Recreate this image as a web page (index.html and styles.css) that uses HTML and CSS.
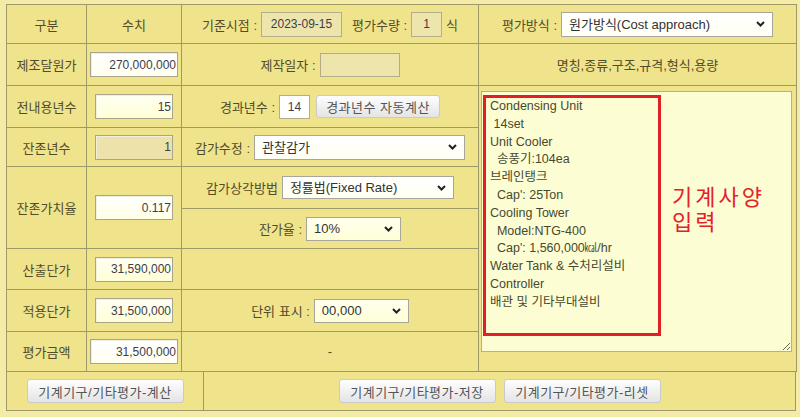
FILE: index.html
```html
<!DOCTYPE html>
<html lang="ko">
<head>
<meta charset="utf-8">
<title>기계기구 평가</title>
<link rel="stylesheet" href="styles.css">
</head>
<body>
<div class="page">
  <table class="grid">
    <colgroup><col class="c1"><col class="c2"><col class="c3"><col class="c4"></colgroup>
    <tr class="r39">
      <td>구분</td>
      <td>수치</td>
      <td>
        <div class="row">
          <span>기준시점 :</span>
          <input class="box dis w81" value="2023-09-15" readonly>
          <span class="gap">평가수량 :</span>
          <input class="box dis w31" value="1" readonly>
          <span>식</span>
        </div>
      </td>
      <td>
        <div class="row">
          <span>평가방식 :</span>
          <span class="sel"><select class="w212"><option>원가방식(Cost approach)</option></select><svg class="chev" viewBox="0 0 9 6" width="9" height="6"><path d="M1 1 L4.5 4.5 L8 1" fill="none" stroke="#222" stroke-width="2"/></svg></span>
        </div>
      </td>
    </tr>
    <tr class="r42">
      <td>제조달원가</td>
      <td><input class="num wide" value="270,000,000"></td>
      <td>
        <div class="row">
          <span>제작일자 :</span>
          <input class="box dis w80" value="">
        </div>
      </td>
      <td>명칭,종류,구조,규격,형식,용량</td>
    </tr>
    <tr class="r42">
      <td>전내용년수</td>
      <td><input class="num" value="15"></td>
      <td>
        <div class="row">
          <span>경과년수 :</span>
          <input class="box w31 white" value="14">
          <button class="btn calc">경과년수 자동계산</button>
        </div>
      </td>
      <td rowspan="7" class="speccell">
        <div class="spec">
<textarea class="spectext" spellcheck="false">Condensing Unit
 14set
Unit Cooler
  송풍기:104ea
브레인탱크
  Cap': 25Ton
Cooling Tower
  Model:NTG-400
  Cap': 1,560,000㎉/hr
Water Tank &amp; 수처리설비
Controller
배관 및 기타부대설비</textarea>
          <div class="redbox"></div>
          <div class="redtext">
            <div class="redline">기계사양</div>
            <div class="redline">입력</div>
          </div>
        </div>
      </td>
    </tr>
    <tr class="r39">
      <td>잔존년수</td>
      <td><input class="num dis" value="1" readonly></td>
      <td>
        <div class="row">
          <span>감가수정 :</span>
          <span class="sel"><select class="w211"><option>관찰감가</option></select><svg class="chev" viewBox="0 0 9 6" width="9" height="6"><path d="M1 1 L4.5 4.5 L8 1" fill="none" stroke="#222" stroke-width="2"/></svg></span>
        </div>
      </td>
    </tr>
    <tr class="r42">
      <td rowspan="2">잔존가치율</td>
      <td rowspan="2"><input class="num white" value="0.117"></td>
      <td>
        <div class="row">
          <span>감가상각방법</span>
          <span class="sel"><select class="w172"><option>정률법(Fixed Rate)</option></select><svg class="chev" viewBox="0 0 9 6" width="9" height="6"><path d="M1 1 L4.5 4.5 L8 1" fill="none" stroke="#222" stroke-width="2"/></svg></span>
        </div>
      </td>
    </tr>
    <tr class="r40">
      <td>
        <div class="row">
          <span>잔가율 :</span>
          <span class="sel"><select class="w95 yel"><option>10%</option></select><svg class="chev" viewBox="0 0 9 6" width="9" height="6"><path d="M1 1 L4.5 4.5 L8 1" fill="none" stroke="#222" stroke-width="2"/></svg></span>
        </div>
      </td>
    </tr>
    <tr class="r41">
      <td>산출단가</td>
      <td><input class="num" value="31,590,000"></td>
      <td></td>
    </tr>
    <tr class="r42">
      <td>적용단가</td>
      <td><input class="num" value="31,500,000"></td>
      <td>
        <div class="row">
          <span>단위 표시 :</span>
          <span class="sel"><select class="w95 yel"><option>00,000</option></select><svg class="chev" viewBox="0 0 9 6" width="9" height="6"><path d="M1 1 L4.5 4.5 L8 1" fill="none" stroke="#222" stroke-width="2"/></svg></span>
        </div>
      </td>
    </tr>
    <tr class="r40">
      <td>평가금액</td>
      <td><input class="num wide" value="31,500,000"></td>
      <td>-</td>
    </tr>
  </table>
  <div class="foot">
    <div class="fcell left"><button class="btn fbtn">기계기구/기타평가-계산</button></div>
    <div class="fcell right">
      <button class="btn fbtn">기계기구/기타평가-저장</button>
      <button class="btn fbtn">기계기구/기타평가-리셋</button>
    </div>
  </div>
</div>
</body>
</html>
```

FILE: styles.css
```css
* { box-sizing: border-box; }
html, body { margin: 0; }
body {
  width: 800px;
  height: 417px;
  overflow: hidden;
  background: #f3eba6;
  font-family: "Liberation Sans", "Noto Sans CJK KR", sans-serif;
  font-size: 13px;
  color: #524c2b;
}
.page { padding: 4px 4px 0 6px; }

.grid {
  border-collapse: collapse;
  table-layout: fixed;
  width: 790px;
  background: #efe38b;
}
.c1 { width: 80px; }
.c2 { width: 95px; }
.c3 { width: 297px; }
.c4 { width: 318px; }
.grid td {
  border: 1px solid #9f9969;
  padding: 0;
  text-align: center;
  vertical-align: middle;
}
.r39 { height: 39px; }
.r40 { height: 40px; }
.r41 { height: 41px; }
.r42 { height: 42px; }

.row {
  display: flex;
  justify-content: center;
  align-items: center;
  gap: 4px;
}
.gap { margin-left: 6px; }

input {
  font-family: "Liberation Sans", "Noto Sans CJK KR", sans-serif;
  font-size: 12px;
  color: #3d3d4c;
  margin: 0;
  outline: none;
}
.num {
  width: 78px;
  height: 25px;
  border: 1px solid #aaa58a;
  background: linear-gradient(#fffff4, #ffffd6);
  text-align: right;
  padding: 0 1px;
  box-shadow: inset 1px 1px 0 #f0f0e0;
}
.num.wide { width: 88px; background: linear-gradient(#ffffff, #fffff0); }
.num.white { background: linear-gradient(#ffffff, #ffffe6); }
.num.dis { background: #ede3aa; }

.box {
  height: 25px;
  border: 1px solid #b3ad88;
  text-align: center;
  padding: 0;
}
.box.dis { background: #eee5ad; }
.box.white { background: #fff; height: 24px; }
.w31 { width: 31px; }
.w80 { width: 80px; height: 24px; }
.w81 { width: 81px; }

.sel { position: relative; display: inline-block; }
select {
  appearance: none;
  -webkit-appearance: none;
  height: 25px;
  border: 1px solid #a8a69a;
  background: linear-gradient(#ffffff, #fffff3);
  font-family: "Liberation Sans", "Noto Sans CJK KR", sans-serif;
  font-size: 13px;
  color: #333;
  padding: 0 24px 0 7px;
  margin: 0;
  display: block;
}
select.yel { background: linear-gradient(#ffffee, #ffffd6); }
.w212 { width: 212px; }
.w211 { width: 211px; }
.w172 { width: 172px; height: 23px; }
.w95 { width: 95px; height: 24px; }
.chev {
  position: absolute;
  right: 8px;
  top: 50%;
  margin-top: -3px;
  pointer-events: none;
}

.btn {
  font-family: "Liberation Sans", "Noto Sans CJK KR", sans-serif;
  font-size: 13px;
  color: #555;
  border: 1px solid #cacaca;
  border-radius: 3px;
  background: linear-gradient(#fefefe, #e4e4e4);
  height: 23px;
  padding: 0 8px;
  margin: 0;
  letter-spacing: 0.5px;
}
.calc { width: 124px; margin-left: 2px; }

.speccell { vertical-align: top !important; text-align: left !important; padding: 5px 0 0 2px !important; }
.spec { position: relative; width: 311px; height: 261px; }
.spectext {
  display: block;
  width: 311px;
  height: 261px;
  margin: 0;
  border: 1px solid #b4af98;
  background: #fdfdd3;
  font-family: "Liberation Sans", "Noto Sans CJK KR", sans-serif;
  font-size: 12.5px;
  line-height: 17.8px;
  color: #47492f;
  padding: 6px 8px;
  overflow: hidden;
  white-space: pre;
  outline: none;
}
.redbox {
  position: absolute;
  left: 2px;
  top: 4px;
  width: 178px;
  height: 241px;
  border: 3px solid #e11f27;
  pointer-events: none;
}
.redtext {
  position: absolute;
  left: 191px;
  top: 94px;
  font-family: "Liberation Sans", "Noto Sans CJK KR", sans-serif;
  font-size: 22px;
  color: #e3212b;
  letter-spacing: 3px;
  pointer-events: none;
}
.redline {
  height: 25px;
  line-height: 25px;
}

.foot {
  width: 790px;
  height: 39px;
  display: grid;
  grid-template-columns: 197px 1fr;
  border: 1px solid #9f9969;
  border-top: none;
  background: #efe38b;
}
.fcell {
  display: flex;
  align-items: center;
  justify-content: center;
  gap: 8px;
}
.fcell.left { border-right: 1px solid #9f9969; }
.fbtn { height: 24px; width: 157px; padding: 0; }
```
